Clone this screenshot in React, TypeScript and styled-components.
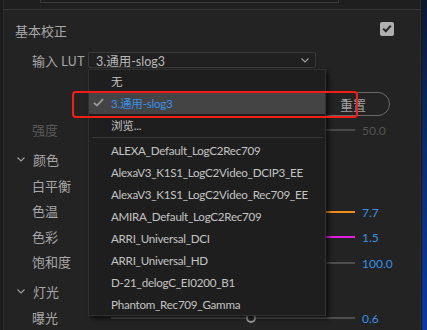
import styled, { createGlobalStyle } from "styled-components";

const GlobalStyle = createGlobalStyle`
    html, body {
        margin: 0;
        padding: 0;
        background: #151515;
    }
    body {
        width: 427px;
        height: 330px;
        overflow: hidden;
        font-family: "Lato", "Noto Sans CJK SC", sans-serif;
    }
`;

const Page = styled.div`
    display: flex;
    width: 427px;
    height: 330px;
`;

const LeftGutter = styled.div`
    width: 3px;
    background: #1c1c1c;
`;

const Panel = styled.div`
    width: 416px;
    background: #232323;
    border-left: 1px solid #2a2a2a;
    border-right: 1px solid #2e2e2e;
    display: flex;
    flex-direction: column;
`;

const RightGutter = styled.div`
    width: 1px;
    background: #161616;
`;

const Desktop = styled.div`
    width: 5px;
    background: linear-gradient(180deg, #0a1830 0%, #0c2c6c 45%, #0a3aa0 100%);
`;

const TopStub = styled.div`
    height: 9px;
    background: #1f1f1f;
    border-bottom: 1px solid #333;
`;

const InputEdge = styled.div`
    margin-left: 36px;
    width: 297px;
    height: 2px;
    border: 1px solid #3a3a3a;
    border-top: none;
    background: #1d1d1d;
`;

const SectionHeader = styled.div`
    height: 42px;
    display: flex;
    align-items: center;
    justify-content: space-between;
    padding: 0 26px 0 11px;
`;

const SectionTitle = styled.span`
    font-family: "Noto Sans CJK SC", sans-serif;
    font-size: 13px;
    color: #a8a8a8;
`;

const CheckBox = styled.div`
    width: 14px;
    height: 14px;
    margin-top: -4px;
    border-radius: 2px;
    background: #b0b0b0;
    display: flex;
    align-items: center;
    justify-content: center;
`;

const LutRow = styled.div`
    height: 18px;
    display: flex;
    align-items: center;
    padding-left: 28px;
`;

const FieldLabel = styled.span<{ $dim?: boolean }>`
    width: 56px;
    flex: none;
    font-family: "Noto Sans CJK SC", sans-serif;
    font-size: 13px;
    color: ${p => (p.$dim ? "#595959" : "#a8a8a8")};
`;

const SelectWrap = styled.div`
    position: relative;
    width: 228px;
`;

const SelectBox = styled.div`
    height: 16px;
    box-sizing: border-box;
    border: 1px solid #3a3a3a;
    border-radius: 2px;
    background: #202020;
    display: flex;
    align-items: center;
    justify-content: space-between;
    padding: 0 6px 0 7px;
    font-size: 12.5px;
    color: #b8b8b8;
`;

const Menu = styled.div`
    position: absolute;
    top: 17px;
    left: 0;
    width: 238px;
    box-sizing: border-box;
    background: #1e1e1e;
    border: 1px solid #303030;
    box-shadow: 3px 3px 4px rgba(0, 0, 0, 0.55);
    z-index: 5;
`;

const MenuItem = styled.div<{ $active?: boolean }>`
    position: relative;
    height: 22px;
    display: flex;
    align-items: center;
    padding-left: 22px;
    font-size: 11.6px;
    letter-spacing: -0.25px;
    color: ${p => (p.$active ? "#3a8fe8" : "#c4c4c4")};
    background: ${p => (p.$active ? "#444" : "transparent")};
`;

const Tick = styled.svg`
    position: absolute;
    left: 4px;
    top: 6px;
`;

const Marker = styled.div`
    position: absolute;
    left: -17px;
    right: -33px;
    top: -1px;
    bottom: -4px;
    border: 2.5px solid #f21d17;
    border-radius: 4px;
    pointer-events: none;
`;

const Separator = styled.div`
    height: 1px;
    margin: 1px 2px 1px 3px;
    background: #383838;
`;

const ResetRow = styled.div`
    margin-top: 23px;
    display: flex;
    justify-content: flex-end;
    padding-right: 30px;
`;

const ResetButton = styled.div`
    width: 74px;
    height: 24px;
    box-sizing: border-box;
    border: 1px solid #6a6a6a;
    border-radius: 12px;
    display: flex;
    align-items: center;
    justify-content: center;
    font-family: "Noto Sans CJK SC", sans-serif;
    font-size: 13px;
    color: #a0a0a0;
`;

const SliderRow = styled.div`
    height: 26px;
    display: flex;
    align-items: center;
    padding-left: 28px;
`;

const RowLabel = styled.span<{ $dim?: boolean }>`
    width: 79px;
    flex: none;
    font-family: "Noto Sans CJK SC", sans-serif;
    font-size: 13px;
    color: ${p => (p.$dim ? "#595959" : "#a8a8a8")};
`;

const Track = styled.div<{ $color: string }>`
    position: relative;
    width: 244px;
    height: 2px;
    margin-top: 2px;
    background: ${p => p.$color};
`;

const Knob = styled.div`
    position: absolute;
    top: -4px;
    width: 10px;
    height: 10px;
    margin-left: -5px;
    box-sizing: border-box;
    border-radius: 50%;
    border: 2px solid #9a9a9a;
    background: #232323;
`;

const Value = styled.span<{ $dim?: boolean }>`
    margin-left: 7px;
    margin-top: 3px;
    font-size: 12px;
    color: ${p => (p.$dim ? "#545454" : "#3a8fe8")};
`;

const GroupHeader = styled.div<{ $top: number }>`
    height: 26px;
    margin-top: ${p => p.$top}px;
    display: flex;
    align-items: center;
    padding-left: 13px;
    gap: 8px;
    font-family: "Noto Sans CJK SC", sans-serif;
    font-size: 13px;
    color: #a8a8a8;
`;

const luts = [
    "ALEXA_Default_LogC2Rec709",
    "AlexaV3_K1S1_LogC2Video_DCIP3_EE",
    "AlexaV3_K1S1_LogC2Video_Rec709_EE",
    "AMIRA_Default_LogC2Rec709",
    "ARRI_Universal_DCI",
    "ARRI_Universal_HD",
    "D-21_delogC_EI0200_B1",
    "Phantom_Rec709_Gamma",
];

type Slider = { label: string; color?: string; value?: string; knob?: number };

const colorRows: Slider[] = [
    { label: "白平衡" },
    { label: "色温", color: "#f28a1c", value: "7.7" },
    { label: "色彩", color: "#e01ee0", value: "1.5" },
    { label: "饱和度", color: "#4d4d4d", value: "100.0" },
];

function Chevron() {
    return (
        <svg width="8" height="5" viewBox="0 0 8 5">
            <polyline points="0.5,0.5 4,4 7.5,0.5" fill="none" stroke="#a0a0a0" strokeWidth="1.1" />
        </svg>
    );
}

function SliderLine({ row }: { row: Slider }) {
    return (
        <SliderRow>
            <RowLabel>{row.label}</RowLabel>
            {row.color && (
                <Track $color={row.color}>
                    {row.knob !== undefined && <Knob style={{ left: `${row.knob}%` }} />}
                </Track>
            )}
            {row.value && <Value>{row.value}</Value>}
        </SliderRow>
    );
}

export default function App() {
    return (
        <Page>
            <GlobalStyle />
            <LeftGutter />
            <Panel>
                <TopStub>
                    <InputEdge />
                </TopStub>
                <SectionHeader>
                    <SectionTitle>基本校正</SectionTitle>
                    <CheckBox>
                        <svg width="10" height="9" viewBox="0 0 10 9">
                            <polyline points="1.2,4.6 3.8,7.2 8.8,1.6" fill="none" stroke="#262626" strokeWidth="2" />
                        </svg>
                    </CheckBox>
                </SectionHeader>
                <LutRow>
                    <FieldLabel>输入 LUT</FieldLabel>
                    <SelectWrap>
                        <SelectBox>
                            <span>3.通用-slog3</span>
                            <Chevron />
                        </SelectBox>
                        <Menu>
                            <MenuItem>无</MenuItem>
                            <MenuItem $active>
                                <Tick width="11" height="9" viewBox="0 0 11 9">
                                    <polyline points="1,4.8 4,7.6 10,1.2" fill="none" stroke="#9a9a9a" strokeWidth="1.8" />
                                </Tick>
                                3.通用-slog3
                                <Marker />
                            </MenuItem>
                            <MenuItem>浏览...</MenuItem>
                            <Separator />
                            {luts.map(name => (
                                <MenuItem key={name}>{name}</MenuItem>
                            ))}
                        </Menu>
                    </SelectWrap>
                </LutRow>
                <ResetRow>
                    <ResetButton>重置</ResetButton>
                </ResetRow>
                <SliderRow>
                    <RowLabel $dim>强度</RowLabel>
                    <Track $color="#474747" />
                    <Value $dim>50.0</Value>
                </SliderRow>
                <GroupHeader $top={5}>
                    <Chevron />
                    颜色
                </GroupHeader>
                {colorRows.map(row => (
                    <SliderLine key={row.label} row={row} />
                ))}
                <GroupHeader $top={4}>
                    <Chevron />
                    灯光
                </GroupHeader>
                <SliderLine row={{ label: "曝光", color: "#4d4d4d", value: "0.6", knob: 57.4 }} />
            </Panel>
            <RightGutter />
            <Desktop />
        </Page>
    );
}
